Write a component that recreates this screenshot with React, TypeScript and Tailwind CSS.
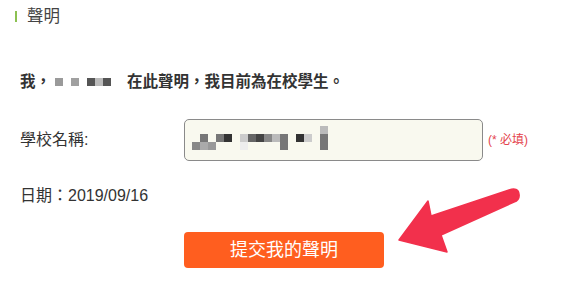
const FONT = { fontFamily: '"Liberation Sans", "Noto Sans CJK TC", sans-serif' }

// blurred (mosaic) school name: [col, row, colour]
const schoolPixels: [number, number, string][] = [
  [16, 0, "#bbbbbb"],
  [1, 1, "#777777"], [3, 1, "#777777"], [4, 1, "#333333"], [6, 1, "#cccccc"],
  [7, 1, "#666666"], [8, 1, "#444444"], [9, 1, "#888888"], [10, 1, "#bbbbbb"],
  [11, 1, "#777777"], [13, 1, "#333333"], [14, 1, "#cccccc"], [16, 1, "#777777"],
  [0, 2, "#888888"], [1, 2, "#aaaaaa"], [2, 2, "#999999"], [6, 2, "#eeeeee"],
  [11, 2, "#777777"], [16, 2, "#777777"]
]

function Arrow() {
  return (
    <svg className="pointer-events-none absolute left-0 top-0" width="574" height="284" viewBox="0 0 574 284">
      <path
        d="M399 240 L428 201 L431 216 L509 190 Q518 187 519 194 Q520 200 514 202 L441 235 L447 252 Z"
        fill="#f2304c"
        stroke="#f2304c"
        strokeWidth="1.5"
        strokeLinejoin="round"
      />
    </svg>
  )
}

export default function App() {
  return (
    <div className="relative h-[284px] w-[574px] overflow-hidden bg-white text-[#333]" style={FONT}>
      {/* section title */}
      <div className="flex h-[32px] items-center gap-[10px] pl-[15px]">
        <div className="h-[11px] w-[2px] bg-[#8cc152]" />
        <span className="text-[16.5px] text-[#444]">聲明</span>
      </div>

      {/* declaration sentence */}
      <div className="mt-[40px] flex h-[20px] items-center pl-[20px] text-[15.5px] font-bold leading-[20px]">
        <span>我，</span>
        <div className="ml-[4px] flex items-center">
          <div className="h-[8px] w-[8px] bg-[#9a9a9a]" />
          <div className="ml-[8px] h-[8px] w-[8px] bg-[#a0a0a0]" />
          <div className="ml-[8px] h-[8px] w-[8px] bg-[#555]" />
          <div className="h-[8px] w-[8px] bg-[#bbb]" />
          <div className="h-[8px] w-[8px] bg-[#555]" />
        </div>
        <span className="ml-[16px]">在此聲明，我目前為在校學生。</span>
      </div>

      {/* school name */}
      <div className="mt-[27px] flex h-[42px] items-center">
        <label className="w-[184px] pl-[20px] text-[16px]">學校名稱:</label>
        <div className="relative h-[42px] w-[299px] rounded-[5px] border border-[#8a8a8a] bg-[#f9f9ef]">
          {schoolPixels.map(([c, r, color], i) => (
            <div
              key={i}
              className="absolute h-[8px] w-[8px]"
              style={{ left: 7 + c * 8, top: 6 + r * 8, background: color }}
            />
          ))}
        </div>
        <span className="ml-[5px] text-[12px] text-[#e4434d]">(* 必填)</span>
      </div>

      {/* date */}
      <div className="mt-[25px] h-[20px] pl-[20px] text-[16px] leading-[20px]">日期：2019/09/16</div>

      {/* submit */}
      <button className="ml-[184px] mt-[26px] flex h-[36px] w-[200px] items-center justify-center rounded-[4px] bg-[#ff5e1f] text-[18px] text-white">
        提交我的聲明
      </button>

      <Arrow />
    </div>
  )
}
